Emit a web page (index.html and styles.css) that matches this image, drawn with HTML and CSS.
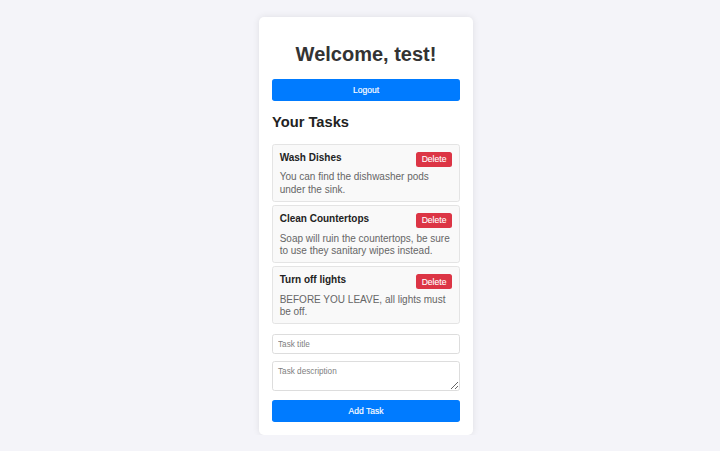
FILE: index.html
```html
<!DOCTYPE html>
<html lang="en">
<head>
<meta charset="utf-8">
<title>Tasks</title>
<link rel="stylesheet" href="styles.css">
</head>
<body>
<div class="card">
  <h1 class="welcome">Welcome, test!</h1>
  <button class="btn btn-primary">Logout</button>
  <h2 class="section-title">Your Tasks</h2>
  <ul class="task-list">
    <li class="task">
      <div class="task-head">
        <span class="task-title">Wash Dishes</span>
        <button class="btn-delete">Delete</button>
      </div>
      <p class="task-desc">You can find the dishwasher pods under the sink.</p>
    </li>
    <li class="task">
      <div class="task-head">
        <span class="task-title">Clean Countertops</span>
        <button class="btn-delete">Delete</button>
      </div>
      <p class="task-desc">Soap will ruin the countertops, be sure to use they sanitary wipes instead.</p>
    </li>
    <li class="task">
      <div class="task-head">
        <span class="task-title">Turn off lights</span>
        <button class="btn-delete">Delete</button>
      </div>
      <p class="task-desc">BEFORE YOU LEAVE, all lights must be off.</p>
    </li>
  </ul>
  <form class="task-form">
    <input class="field" type="text" placeholder="Task title">
    <textarea class="field field-area" placeholder="Task description"></textarea>
    <button type="button" class="btn btn-primary btn-add">Add Task</button>
  </form>
</div>
</body>
</html>
```
FILE: styles.css
```css
* { box-sizing: border-box; }

html, body {
  margin: 0;
  padding: 0;
  background: #f4f4f9;
  font-family: "Liberation Sans", Arial, sans-serif;
}

body {
  padding-top: 17px;
}

.card {
  width: 214px;
  margin-left: calc(50% - 101px);
  background: #ffffff;
  border-radius: 5px;
  box-shadow: 0 0 7px rgba(0, 0, 0, 0.09);
  padding: 13.33px 13px 12.7px;
}

.welcome {
  margin: 12.7px 0 13.2px;
  font-size: 20px;
  line-height: 23px;
  font-weight: bold;
  color: #333333;
  text-align: center;
}

.btn {
  display: block;
  width: 100%;
  border: none;
  border-radius: 2.7px;
  font-family: inherit;
  font-size: 8.5px;
  color: #ffffff;
  cursor: pointer;
  padding: 0;
  -webkit-text-stroke: 0.15px #ffffff;
}

.btn-primary {
  background: #007bff;
  height: 21.7px;
}

.section-title {
  margin: 12.7px 0 13.3px;
  font-size: 14.7px;
  line-height: 17px;
  font-weight: bold;
  color: #222222;
}

.task-list {
  list-style: none;
  margin: 0;
  padding: 0;
  display: flex;
  flex-direction: column;
  gap: 2.7px;
}

.task {
  background: #f9f9f9;
  border: 0.67px solid #e4e4e4;
  border-radius: 2.7px;
  padding: 6.67px 6.67px 4.8px;
}

.task-head {
  display: flex;
  justify-content: space-between;
  align-items: flex-start;
  height: 15.67px;
}

.task-title {
  font-size: 10px;
  line-height: 11px;
  font-weight: bold;
  color: #222222;
}

.btn-delete {
  background: #dc3545;
  color: #ffffff;
  border: none;
  border-radius: 2.5px;
  font-family: inherit;
  font-size: 8.6px;
  width: 36.6px;
  height: 15.67px;
  padding: 0;
  -webkit-text-stroke: 0.1px #ffffff;
}

.task-desc {
  margin: 4.3px 0 0;
  font-size: 10px;
  line-height: 12.5px;
  color: #666666;
}

.task-form {
  margin-top: 9.6px;
  display: flex;
  flex-direction: column;
}

.field {
  width: 100%;
  border: 0.67px solid #dddddd;
  border-radius: 2.7px;
  font-family: inherit;
  font-size: 8.2px;
  color: #333333;
  padding: 0 5px;
  height: 20.4px;
  background: #ffffff;
  margin: 0;
}

.field::placeholder {
  color: #808080;
}

.field-area {
  margin-top: 6.3px;
  height: 30.3px;
  padding: 4.8px 5px;
  line-height: 10px;
  resize: vertical;
}

.btn-add {
  margin-top: 8.7px;
  height: 22.3px;
}
```
